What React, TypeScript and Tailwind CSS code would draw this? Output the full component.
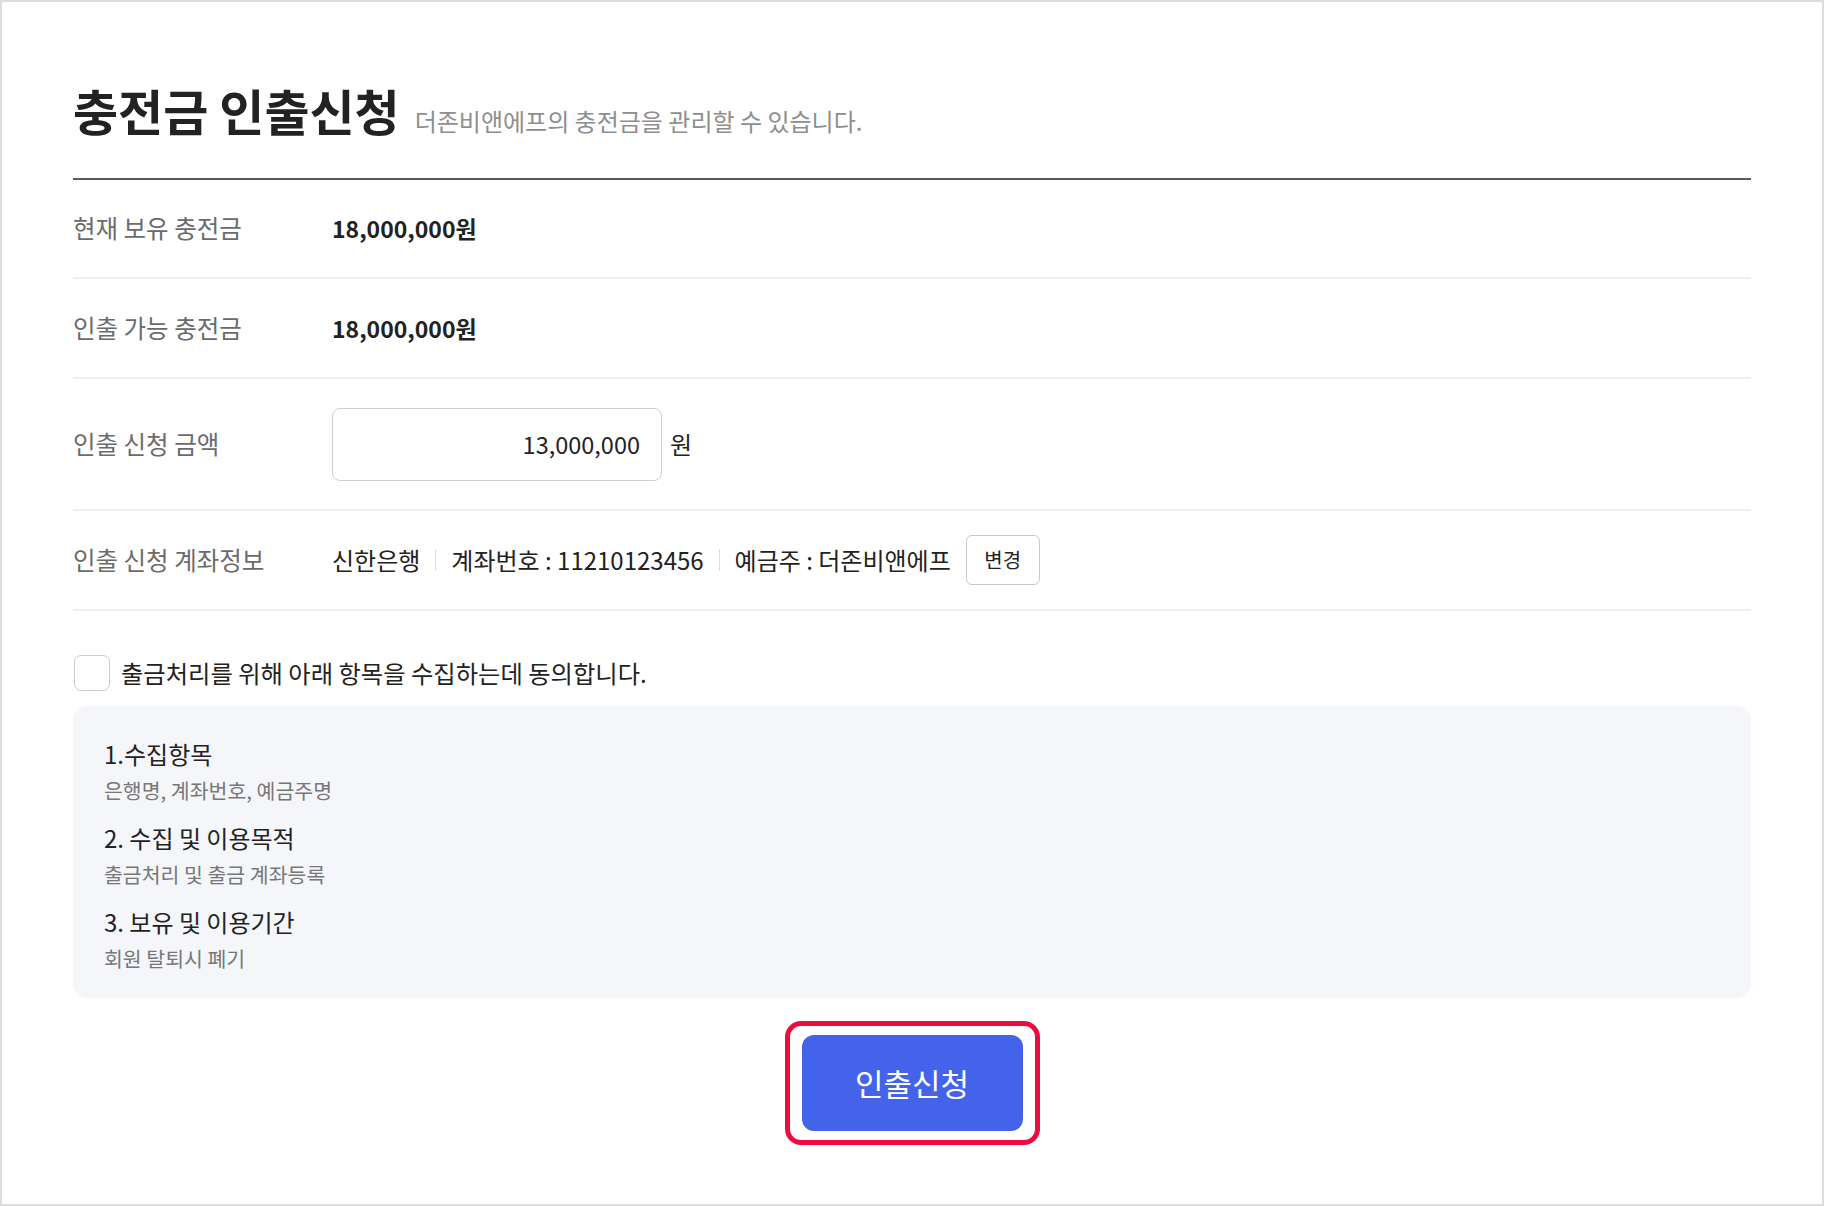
export default function App() {
  const rowLabel = "w-[259px] shrink-0 text-[24.5px] leading-none text-[#6b6b6b]";
  return (
    <div className="w-[1824px] h-[1206px] border-2 border-[#dddddd] bg-white px-[71px] pt-[83px] font-['Noto_Sans_CJK_KR','Noto_Sans',sans-serif] text-[#222222]">
      <div className="flex items-baseline gap-[15px] border-b-2 border-[#5a5a5a] pb-[44px]">
        <h1 className="text-[49px] font-bold leading-none text-[#222222]">충전금 인출신청</h1>
        <p className="text-[24px] leading-none text-[#8e8e8e]">더존비앤에프의 충전금을 관리할 수 있습니다.</p>
      </div>

      <div className="flex h-[99px] items-center border-b-2 border-[#eeeeee]">
        <div className={rowLabel}>현재 보유 충전금</div>
        <div className="text-[23px] font-bold leading-none text-[#222222]">18,000,000원</div>
      </div>

      <div className="flex h-[100px] items-center border-b-2 border-[#eeeeee]">
        <div className={rowLabel}>인출 가능 충전금</div>
        <div className="text-[23px] font-bold leading-none text-[#222222]">18,000,000원</div>
      </div>

      <div className="flex h-[132px] items-center border-b-2 border-[#eeeeee]">
        <div className={rowLabel}>인출 신청 금액</div>
        <input
          readOnly
          defaultValue="13,000,000"
          className="h-[73px] w-[330px] rounded-[8px] border-[1.5px] border-[#cfcfcf] bg-white pr-[21px] text-right text-[23.5px] text-[#222222] outline-none"
        />
        <span className="ml-[8px] text-[24px] leading-none text-[#222222]">원</span>
      </div>

      <div className="flex h-[100px] items-center border-b-2 border-[#eeeeee]">
        <div className={rowLabel}>인출 신청 계좌정보</div>
        <div className="flex items-center text-[24px] leading-none text-[#222222]">
          <span>신한은행</span>
          <span className="mx-[15px] h-[22px] w-px bg-[#dddddd]" />
          <span>계좌번호 : 11210123456</span>
          <span className="mx-[15px] h-[22px] w-px bg-[#dddddd]" />
          <span>예금주 : 더존비앤에프</span>
          <button className="ml-[15px] flex h-[50px] w-[74px] items-center justify-center rounded-[6px] border border-[#c8c8c8] bg-white text-[20px] text-[#222222]">
            변경
          </button>
        </div>
      </div>

      <div className="mt-[44px] flex items-center gap-[11px]">
        <span className="ml-px h-[36px] w-[36px] rounded-[7px] border-[1.5px] border-[#cccccc] bg-white" />
        <span className="text-[24.3px] leading-none text-[#222222]">출금처리를 위해 아래 항목을 수집하는데 동의합니다.</span>
      </div>

      <div className="mt-[15px] h-[292px] rounded-[14px] bg-[#f5f6fa] pl-[31px] pt-[30px]">
        <div className="text-[24px] leading-[36px] text-[#222222]">1.수집항목</div>
        <div className="text-[20.5px] leading-[36px] text-[#777777]">은행명, 계좌번호, 예금주명</div>
        <div className="mt-[12px] text-[24px] leading-[36px] text-[#222222]">2. 수집 및 이용목적</div>
        <div className="text-[20.5px] leading-[36px] text-[#777777]">출금처리 및 출금 계좌등록</div>
        <div className="mt-[12px] text-[24px] leading-[36px] text-[#222222]">3. 보유 및 이용기간</div>
        <div className="text-[20.5px] leading-[36px] text-[#777777]">회원 탈퇴시 폐기</div>
      </div>

      <div className="mt-[23px] flex justify-center">
        <div className="rounded-[16px] border-[5px] border-[#ec0d3e] px-[12px] py-[9px]">
          <button className="flex h-[96px] w-[221px] items-center justify-center rounded-[12px] bg-[#4364ea] text-[31px] text-white">
            인출신청
          </button>
        </div>
      </div>
    </div>
  );
}
